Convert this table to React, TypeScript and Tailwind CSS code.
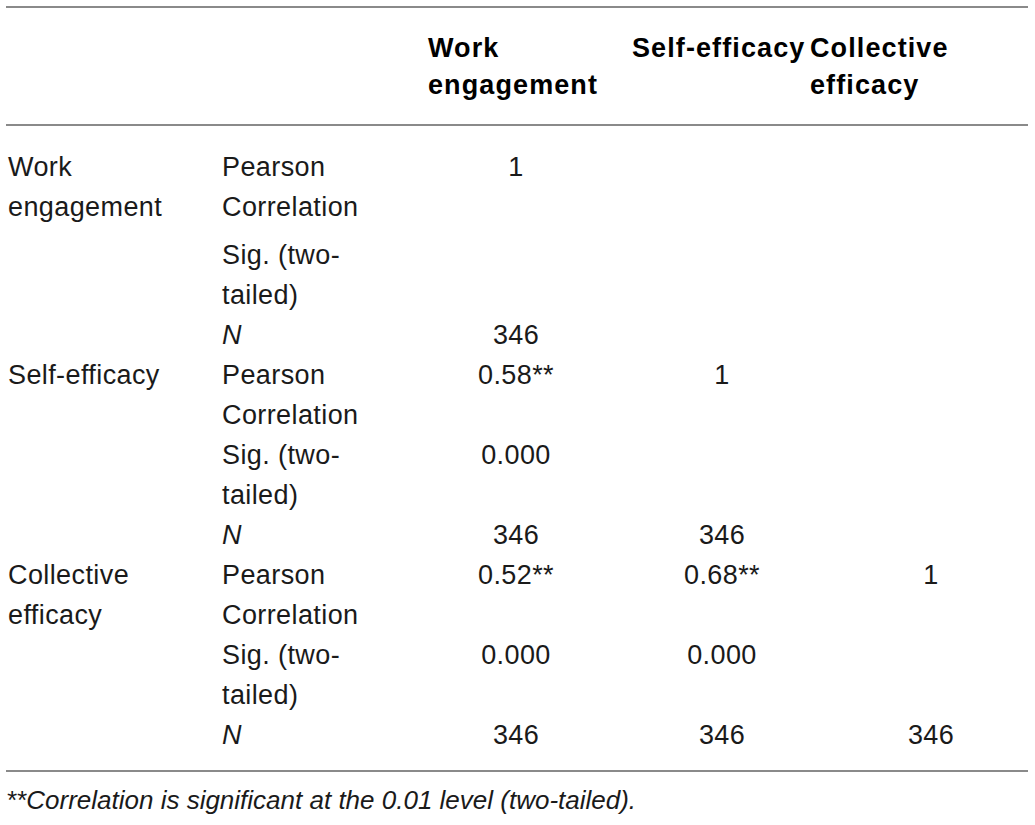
const font = { fontFamily: '"Liberation Sans", Arial, sans-serif' };

type Group = {
  label: string[];
  pearson: [string, string, string];
  sig: [string, string, string];
  n: [string, string, string];
  gap?: boolean;
};

const groups: Group[] = [
  {
    label: ['Work', 'engagement'],
    pearson: ['1', '', ''],
    sig: ['', '', ''],
    n: ['346', '', ''],
    gap: true,
  },
  {
    label: ['Self-efficacy'],
    pearson: ['0.58**', '1', ''],
    sig: ['0.000', '', ''],
    n: ['346', '346', ''],
  },
  {
    label: ['Collective', 'efficacy'],
    pearson: ['0.52**', '0.68**', '1'],
    sig: ['0.000', '0.000', ''],
    n: ['346', '346', '346'],
  },
];

const cols = 'grid grid-cols-[208px_206px_204px_178px_226px]';

function Values({ v, gap }: { v: [string, string, string]; gap?: boolean }) {
  return (
    <>
      <div className={gap ? 'pr-[12px] pt-2 text-center' : 'pr-[12px] text-center'}>{v[0]}</div>
      <div className={gap ? 'pl-[18px] pt-2 text-center' : 'pl-[18px] text-center'}>{v[1]}</div>
      <div className={gap ? 'pl-[32px] pt-2 text-center' : 'pl-[32px] text-center'}>{v[2]}</div>
    </>
  );
}

function GroupRows({ g }: { g: Group }) {
  return (
    <div className={cols}>
      <div className="row-span-3 pl-[2px]">
        {g.label.map((l) => (
          <div key={l}>{l}</div>
        ))}
      </div>
      <div className="pl-2">
        Pearson
        <br />
        Correlation
      </div>
      <Values v={g.pearson} />
      <div className={g.gap ? 'col-start-2 pl-2 pt-2' : 'col-start-2 pl-2'}>
        Sig. (two-
        <br />
        tailed)
      </div>
      <Values v={g.sig} gap={g.gap} />
      <div className="col-start-2 pl-2 italic">N</div>
      <Values v={g.n} />
    </div>
  );
}

export default function App() {
  return (
    <div className="min-h-screen bg-white text-[#1a1a1a]" style={font}>
      <div className="ml-[6px] w-[1022px] pt-[6px]">
        <div className="border-t-2 border-[#8a8a8a]" />
        <div className={`${cols} pt-[22px] pb-[20px] text-[27px] font-bold leading-[37px] tracking-[1.1px] text-black`}>
          <div />
          <div />
          <div className="pl-2">
            Work
            <br />
            engagement
          </div>
          <div className="whitespace-nowrap pl-2">Self-efficacy</div>
          <div className="pl-2">
            Collective
            <br />
            efficacy
          </div>
        </div>
        <div className="border-t-2 border-[#8a8a8a]" />
        <div className="pt-[21px] pb-[15px] text-[27px] leading-[40px] tracking-[0.4px]">
          {groups.map((g) => (
            <GroupRows key={g.label.join(' ')} g={g} />
          ))}
        </div>
        <div className="border-t-2 border-[#8a8a8a]" />
        <div className="pt-[13px] text-[26px] italic leading-[30px]">
          **Correlation is significant at the 0.01 level (two-tailed).
        </div>
      </div>
    </div>
  );
}
